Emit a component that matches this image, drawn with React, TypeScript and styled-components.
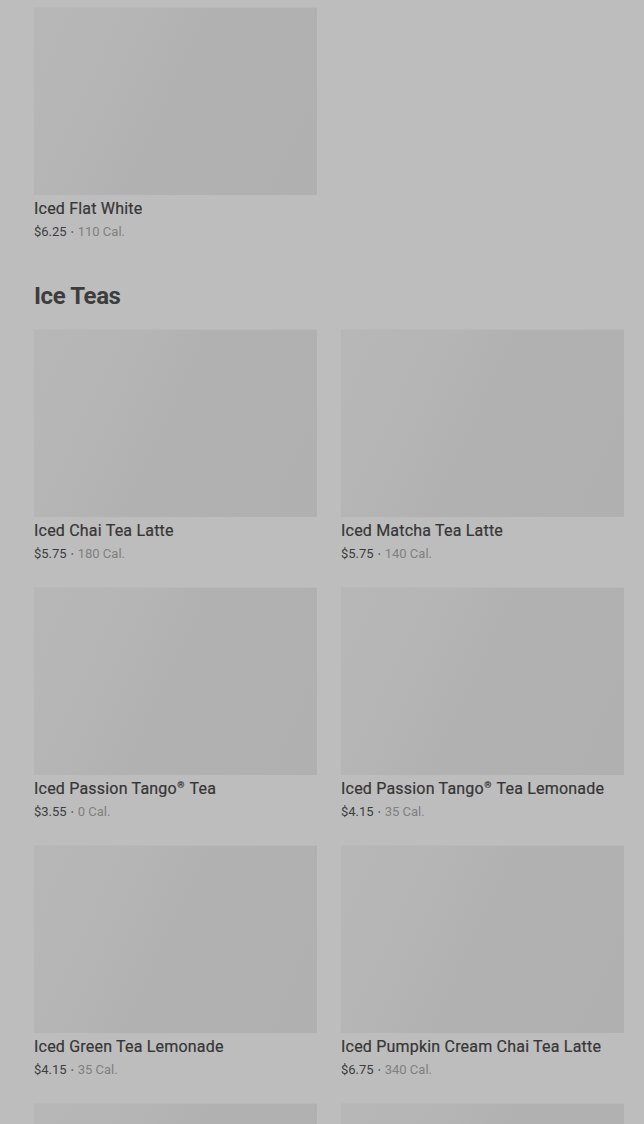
import styled, { createGlobalStyle } from "styled-components";

type Drink = { id: number; name: string; price: string; cal: number };

const earlier: Drink[] = [{ id: 1, name: "Iced Flat White", price: "$6.25", cal: 110 }];

const iceTeas: Drink[] = [
  { id: 2, name: "Iced Chai Tea Latte", price: "$5.75", cal: 180 },
  { id: 3, name: "Iced Matcha Tea Latte", price: "$5.75", cal: 140 },
  { id: 4, name: "Iced Passion Tango® Tea", price: "$3.55", cal: 0 },
  { id: 5, name: "Iced Passion Tango® Tea Lemonade", price: "$4.15", cal: 35 },
  { id: 6, name: "Iced Green Tea Lemonade", price: "$4.15", cal: 35 },
  { id: 7, name: "Iced Pumpkin Cream Chai Tea Latte", price: "$6.75", cal: 340 },
];

// the ® mark sits raised and small, as in the menu
const renderName = (name: string) => {
  const parts = name.split("®");
  return parts.map((part, i) => (
    <span key={i}>
      {part}
      {i < parts.length - 1 && <Reg>®</Reg>}
    </span>
  ));
};

const DrinkCard = ({ drink }: { drink: Drink }) => (
  <Card>
    <Thumb />
    <Name>{renderName(drink.name)}</Name>
    <Meta>
      <Price>{drink.price}</Price>
      <Dot>•</Dot>
      <Cal>{drink.cal} Cal.</Cal>
    </Meta>
  </Card>
);

const App = () => {
  return (
    <Page>
      <GlobalStyle />
      <Section>
        <Grid>
          {earlier.map((d) => (
            <DrinkCard key={d.id} drink={d} />
          ))}
        </Grid>
      </Section>
      <Section>
        <Heading>Ice Teas</Heading>
        <Grid>
          {iceTeas.map((d) => (
            <DrinkCard key={d.id} drink={d} />
          ))}
          {/* next row, only the picture tops show in the viewport */}
          <Card>
            <Thumb />
          </Card>
          <Card>
            <Thumb />
          </Card>
        </Grid>
      </Section>
    </Page>
  );
};
export default App;

const GlobalStyle = createGlobalStyle`
  html, body {
    margin: 0;
    background: #bdbdbd;
  }
  body {
    font-family: Roboto, "Liberation Sans", sans-serif;
  }
`;

const Page = styled.main`
  padding: 7px 20px 0 34px;
  background: #bdbdbd;
  height: 1124px;
  overflow: hidden;
  box-sizing: border-box;
`;

const Section = styled.section`
  & + & {
    margin-top: 39px;
  }
`;

const Heading = styled.h2`
  margin: 0 0 17px;
  font-size: 24px;
  line-height: 32px;
  font-weight: 700;
  letter-spacing: -0.4px;
  color: #3d3d3d;
`;

const Grid = styled.div`
  display: grid;
  grid-template-columns: 1fr 1fr;
  column-gap: 24px;
  row-gap: 24px;
`;

const Card = styled.article`
  display: flex;
  flex-direction: column;
`;

const Thumb = styled.div`
  height: 188px;
  background: linear-gradient(115deg, #b7b7b7 0%, #b5b5b5 28%, #b1b1b1 48%, #b0b0b0 100%);
  border-top: 1px solid #b9b9b9;
  box-sizing: border-box;
`;

const Name = styled.div`
  margin-top: 3px;
  font-size: 16px;
  line-height: 22px;
  font-weight: 400;
  letter-spacing: 0.2px;
  color: #363636;
  white-space: nowrap;
  -webkit-text-stroke: 0.2px #363636;
`;

const Reg = styled.sup`
  font-size: 9px;
  line-height: 0;
  vertical-align: 6px;
  margin: 0 1px 0 0.5px;
`;

const Meta = styled.div`
  margin-top: 3px;
  display: flex;
  align-items: center;
  gap: 4px;
  font-size: 13px;
  line-height: 18px;
`;

const Price = styled.span`
  color: #3d3d3d;
`;

const Dot = styled.span`
  color: #6a6a6a;
  font-size: 9px;
`;

const Cal = styled.span`
  color: #808080;
`;
